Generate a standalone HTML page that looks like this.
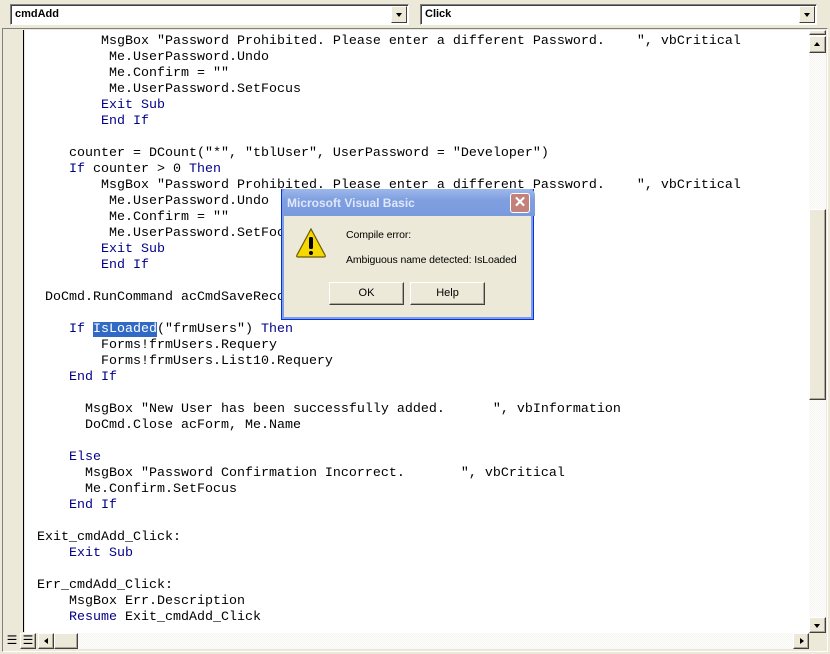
<!DOCTYPE html>
<html><head><style>
*{margin:0;padding:0;box-sizing:border-box}
body{width:830px;height:654px;background:#ece9d8;position:relative;overflow:hidden;font-family:"Liberation Sans",sans-serif}
.combo{position:absolute;top:4px;height:21px;background:#fff;border:1px solid;border-color:#808080 #fff #fff #808080;box-shadow:inset 1px 1px 0 #404040;font:bold 11px "Liberation Sans",sans-serif;padding:3px 4px}
.dd{position:absolute;right:1px;top:1px;width:16px;height:17px;background:#ece9d8;border:1px solid;border-color:#fff #404040 #404040 #fff}
.dd:after{content:"";position:absolute;left:4px;top:6px;border:3.5px solid transparent;border-top:4px solid #000}
#frame{position:absolute;left:2px;top:28px;width:826px;height:624px;border:1px solid;border-color:#808080 #fff #fff #808080}
#gutter{position:absolute;left:4px;top:30px;width:20px;height:602px;background:#ece9d8;border-right:1px solid #000}
#code{position:absolute;left:25px;top:30px;width:784px;height:603px;background:#fff;overflow:hidden}
pre{position:absolute;left:12px;top:4px;font:13.33px/16px "Liberation Mono",monospace;color:#000;white-space:pre}
.k{color:#00008b}
.sel{background:#316ac5;color:#fff}
.vs{position:absolute;left:809px;top:30px;width:17px;height:603px;background:repeating-conic-gradient(#f4f3ee 0 25%,#ffffff 0 50%) 0 0/2px 2px}
.btn{position:absolute;background:#ece9d8;border:1px solid;border-color:#fff #404040 #404040 #fff;box-shadow:inset -1px -1px 0 #aca899}
.hs{position:absolute;left:38px;top:633px;width:771px;height:16px;background:repeating-conic-gradient(#f4f3ee 0 25%,#ffffff 0 50%) 0 0/2px 2px}
#dlg{position:absolute;left:281px;top:189px;width:253px;height:131px;background:#ece9d8;border:1px solid #0831d9;border-top:none;box-shadow:inset 0 0 0 2px #7b9ee8}
#tb{position:absolute;left:0;top:0;width:253px;height:27px;background:linear-gradient(#9db8eb,#7f9fe0 40%,#7a9ade);color:#dfe8fa;font:bold 12px "Liberation Sans",sans-serif;padding:7px 5px;border-radius:6px 6px 0 0}
#x{position:absolute;right:5px;top:4px;width:20px;height:20px;background:#c4807a;border:1px solid #fff;border-radius:3px;color:#fff;font:bold 15px "Liberation Sans";text-align:center;line-height:17px}
.t{position:absolute;font:10.5px "Liberation Sans",sans-serif;color:#000;letter-spacing:-0.1px}
.b{position:absolute;width:75px;height:23px;background:#ece9d8;border:1px solid;border-color:#fff #404040 #404040 #fff;box-shadow:inset -1px -1px 0 #aca899;font:11px "Liberation Sans";text-align:center;line-height:20px}
</style></head><body>
<div class="combo" style="left:10px;width:399px">cmdAdd<div class="dd"></div></div>
<div class="combo" style="left:420px;width:397px">Click<div class="dd"></div></div>
<div id="frame"></div>
<div id="gutter"></div>
<div id="code"><pre>        MsgBox "Password Prohibited. Please enter a different Password.    ", vbCritical
         Me.UserPassword.Undo
         Me.Confirm = ""
         Me.UserPassword.SetFocus
        <span class="k">Exit Sub</span>
        <span class="k">End If</span>

    counter = DCount("*", "tblUser", UserPassword = "Developer")
    <span class="k">If</span> counter &gt; 0 <span class="k">Then</span>
        MsgBox "Password Prohibited. Please enter a different Password.    ", vbCritical
         Me.UserPassword.Undo
         Me.Confirm = ""
         Me.UserPassword.SetFocus
        <span class="k">Exit Sub</span>
        <span class="k">End If</span>

 DoCmd.RunCommand acCmdSaveRecord

    <span class="k">If</span> <span class="sel">IsLoaded</span>("frmUsers") <span class="k">Then</span>
        Forms!frmUsers.Requery
        Forms!frmUsers.List10.Requery
    <span class="k">End If</span>

      MsgBox "New User has been successfully added.      ", vbInformation
      DoCmd.Close acForm, Me.Name

    <span class="k">Else</span>
      MsgBox "Password Confirmation Incorrect.       ", vbCritical
      Me.Confirm.SetFocus
    <span class="k">End If</span>

Exit_cmdAdd_Click:
    <span class="k">Exit Sub</span>

Err_cmdAdd_Click:
    MsgBox Err.Description
    <span class="k">Resume</span> Exit_cmdAdd_Click</pre></div>
<div class="vs"></div>
<div class="btn" style="left:809px;top:30px;width:17px;height:5px"></div>
<div class="btn" style="left:809px;top:36px;width:17px;height:17px"><div style="position:absolute;left:4px;top:5px;border:3.5px solid transparent;border-bottom:4px solid #000;border-top:none"></div></div>
<div class="btn" style="left:809px;top:209px;width:17px;height:191px"></div>
<div class="btn" style="left:809px;top:617px;width:17px;height:16px"><div style="position:absolute;left:4px;top:6px;border:3.5px solid transparent;border-top:4px solid #000;border-bottom:none"></div></div>
<div class="hs"></div>
<div style="position:absolute;left:4px;top:633px;width:16px;height:16px;font:12px monospace;line-height:14px;text-align:center">☰</div>
<div class="btn" style="left:20px;top:633px;width:16px;height:16px;font:12px monospace;line-height:13px;text-align:center">☰</div>
<div class="btn" style="left:38px;top:633px;width:16px;height:16px"><div style="position:absolute;left:5px;top:4px;border:3.5px solid transparent;border-right:4px solid #000;border-left:none"></div></div>
<div class="btn" style="left:54px;top:633px;width:24px;height:16px"></div>
<div class="btn" style="left:793px;top:633px;width:16px;height:16px"><div style="position:absolute;left:6px;top:4px;border:3.5px solid transparent;border-left:4px solid #000;border-right:none"></div></div>
<div id="dlg">
<div id="tb">Microsoft Visual Basic<div id="x">✕</div></div>
<svg style="position:absolute;left:13px;top:38px" width="32" height="32" viewBox="0 0 32 32"><path d="M16 2 L30 28 Q31 30 29 30 L3 30 Q1 30 2 28 Z" fill="#f5d800" stroke="#6b5a00" stroke-width="1.2"/><rect x="14" y="10" width="4" height="12" rx="1.5" fill="#000"/><circle cx="16" cy="26" r="2" fill="#000"/></svg>
<div class="t" style="left:64px;top:40px">Compile error:</div>
<div class="t" style="left:64px;top:65px">Ambiguous name detected: IsLoaded</div>
<div class="b" style="left:47px;top:93px">OK</div>
<div class="b" style="left:128px;top:93px">Help</div>
</div>
</body></html>
